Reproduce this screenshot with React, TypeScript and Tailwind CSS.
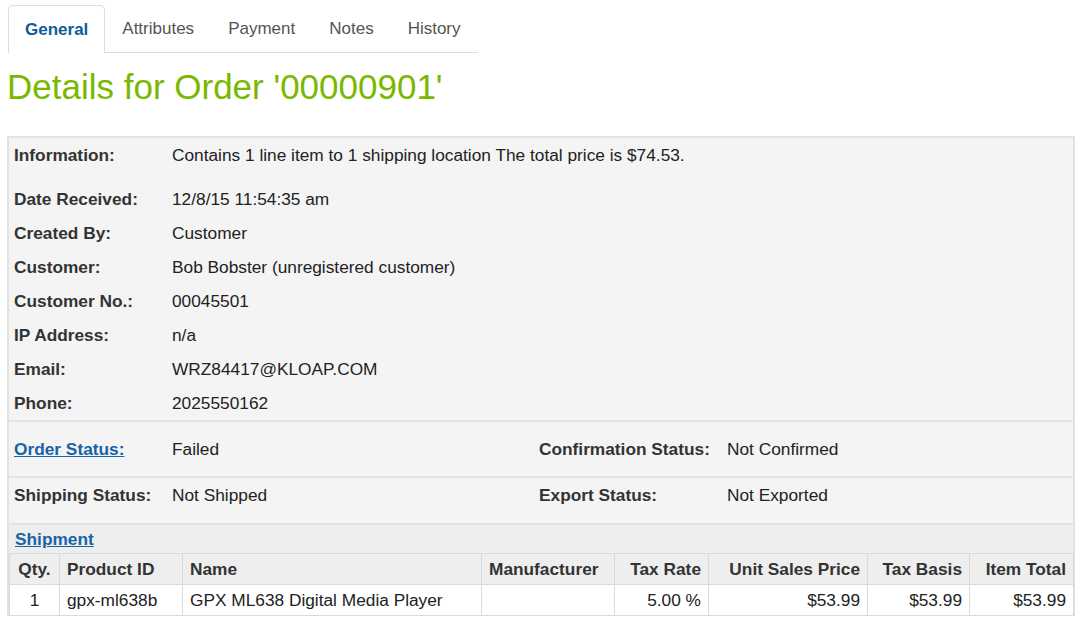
import React from "react";

const rows: [string, string][] = [
  ["Date Received:", "12/8/15 11:54:35 am"],
  ["Created By:", "Customer"],
  ["Customer:", "Bob Bobster (unregistered customer)"],
  ["Customer No.:", "00045501"],
  ["IP Address:", "n/a"],
  ["Email:", "WRZ84417@KLOAP.COM"],
  ["Phone:", "2025550162"],
];

const cols = [
  { label: "Qty.", w: 50, align: "text-center", val: "1" },
  { label: "Product ID", w: 123, align: "text-left", val: "gpx-ml638b" },
  { label: "Name", w: 299, align: "text-left", val: "GPX ML638 Digital Media Player" },
  { label: "Manufacturer", w: 133, align: "text-left", val: "" },
  { label: "Tax Rate", w: 94, align: "text-right", val: "5.00 %" },
  { label: "Unit Sales Price", w: 159, align: "text-right", val: "$53.99" },
  { label: "Tax Basis", w: 102, align: "text-right", val: "$53.99" },
  { label: "Item Total", w: 104, align: "text-right", val: "$53.99" },
];

export default function App() {
  return (
    <div className="min-h-screen bg-white font-['Liberation_Sans',Arial,sans-serif] text-[17.3px] leading-[20px] text-[#222]">
      <div className="pl-2 pt-[5px] text-[17px]">
        <div className="inline-flex border-b border-[#dddddd]">
          <div className="-mb-px flex h-[48px] items-center rounded-t-[5px] border border-b-0 border-[#dddddd] bg-white px-4 font-bold text-[#0f5c9c]">
            General
          </div>
          {["Attributes", "Payment", "Notes", "History"].map((t) => (
            <div key={t} className="flex h-[47px] items-center border border-b-0 border-transparent px-4 text-[#555]">
              {t}
            </div>
          ))}
        </div>
      </div>

      <h1 className="mt-[14px] pl-[7px] text-[35px] leading-[40px] font-normal text-[#7ab800]">
        Details for Order '00000901'
      </h1>

      <div className="ml-[7px] mt-[29px] w-[1068px] border-2 border-b-0 border-[#e2e2e2] bg-[#f4f4f4]">
        <div className="grid grid-cols-[158px_1fr] pl-[5px] pt-[7px] pb-[17px]">
          <div className="font-bold text-[#333]">Information:</div>
          <div>Contains 1 line item to 1 shipping location The total price is $74.53.</div>
        </div>
        {rows.map(([l, v]) => (
          <div key={l} className="grid grid-cols-[158px_1fr] py-[7px] pl-[5px]">
            <div className="font-bold text-[#333]">{l}</div>
            <div>{v}</div>
          </div>
        ))}

        <div className="grid grid-cols-[158px_367px_188px_1fr] border-t-2 border-[#e2e2e2] pl-[5px] pt-[17px] pb-[17px]">
          <a href="#" className="w-fit font-bold text-[#1763a6] underline">Order Status:</a>
          <div>Failed</div>
          <div className="font-bold text-[#333]">Confirmation Status:</div>
          <div>Not Confirmed</div>
        </div>
        <div className="grid grid-cols-[158px_367px_188px_1fr] border-t-2 border-[#e2e2e2] pl-[5px] pt-[7px] pb-[18px]">
          <div className="font-bold text-[#333]">Shipping Status:</div>
          <div>Not Shipped</div>
          <div className="font-bold text-[#333]">Export Status:</div>
          <div>Not Exported</div>
        </div>

        <div className="border-t-2 border-[#e2e2e2] bg-[#eeeeee]">
          <div className="pl-[6px] pt-[4px] pb-[4px]">
            <a href="#" className="font-bold text-[#1763a6] underline">Shipment</a>
          </div>
          <table className="w-full table-fixed border-collapse">
            <colgroup>
              {cols.map((c) => (
                <col key={c.label} style={{ width: c.w }} />
              ))}
            </colgroup>
            <thead>
              <tr className="h-[31px] bg-[#eeeeee]">
                {cols.map((c) => (
                  <th
                    key={c.label}
                    className={`border border-[#dadada] px-[7px] font-bold text-[#333] ${c.align}`}
                  >
                    {c.label}
                  </th>
                ))}
              </tr>
            </thead>
            <tbody>
              <tr className="h-[31px] bg-white">
                {cols.map((c) => (
                  <td key={c.label} className={`border border-[#dadada] px-[7px] ${c.align}`}>
                    {c.val}
                  </td>
                ))}
              </tr>
            </tbody>
          </table>
        </div>
      </div>
    </div>
  );
}
